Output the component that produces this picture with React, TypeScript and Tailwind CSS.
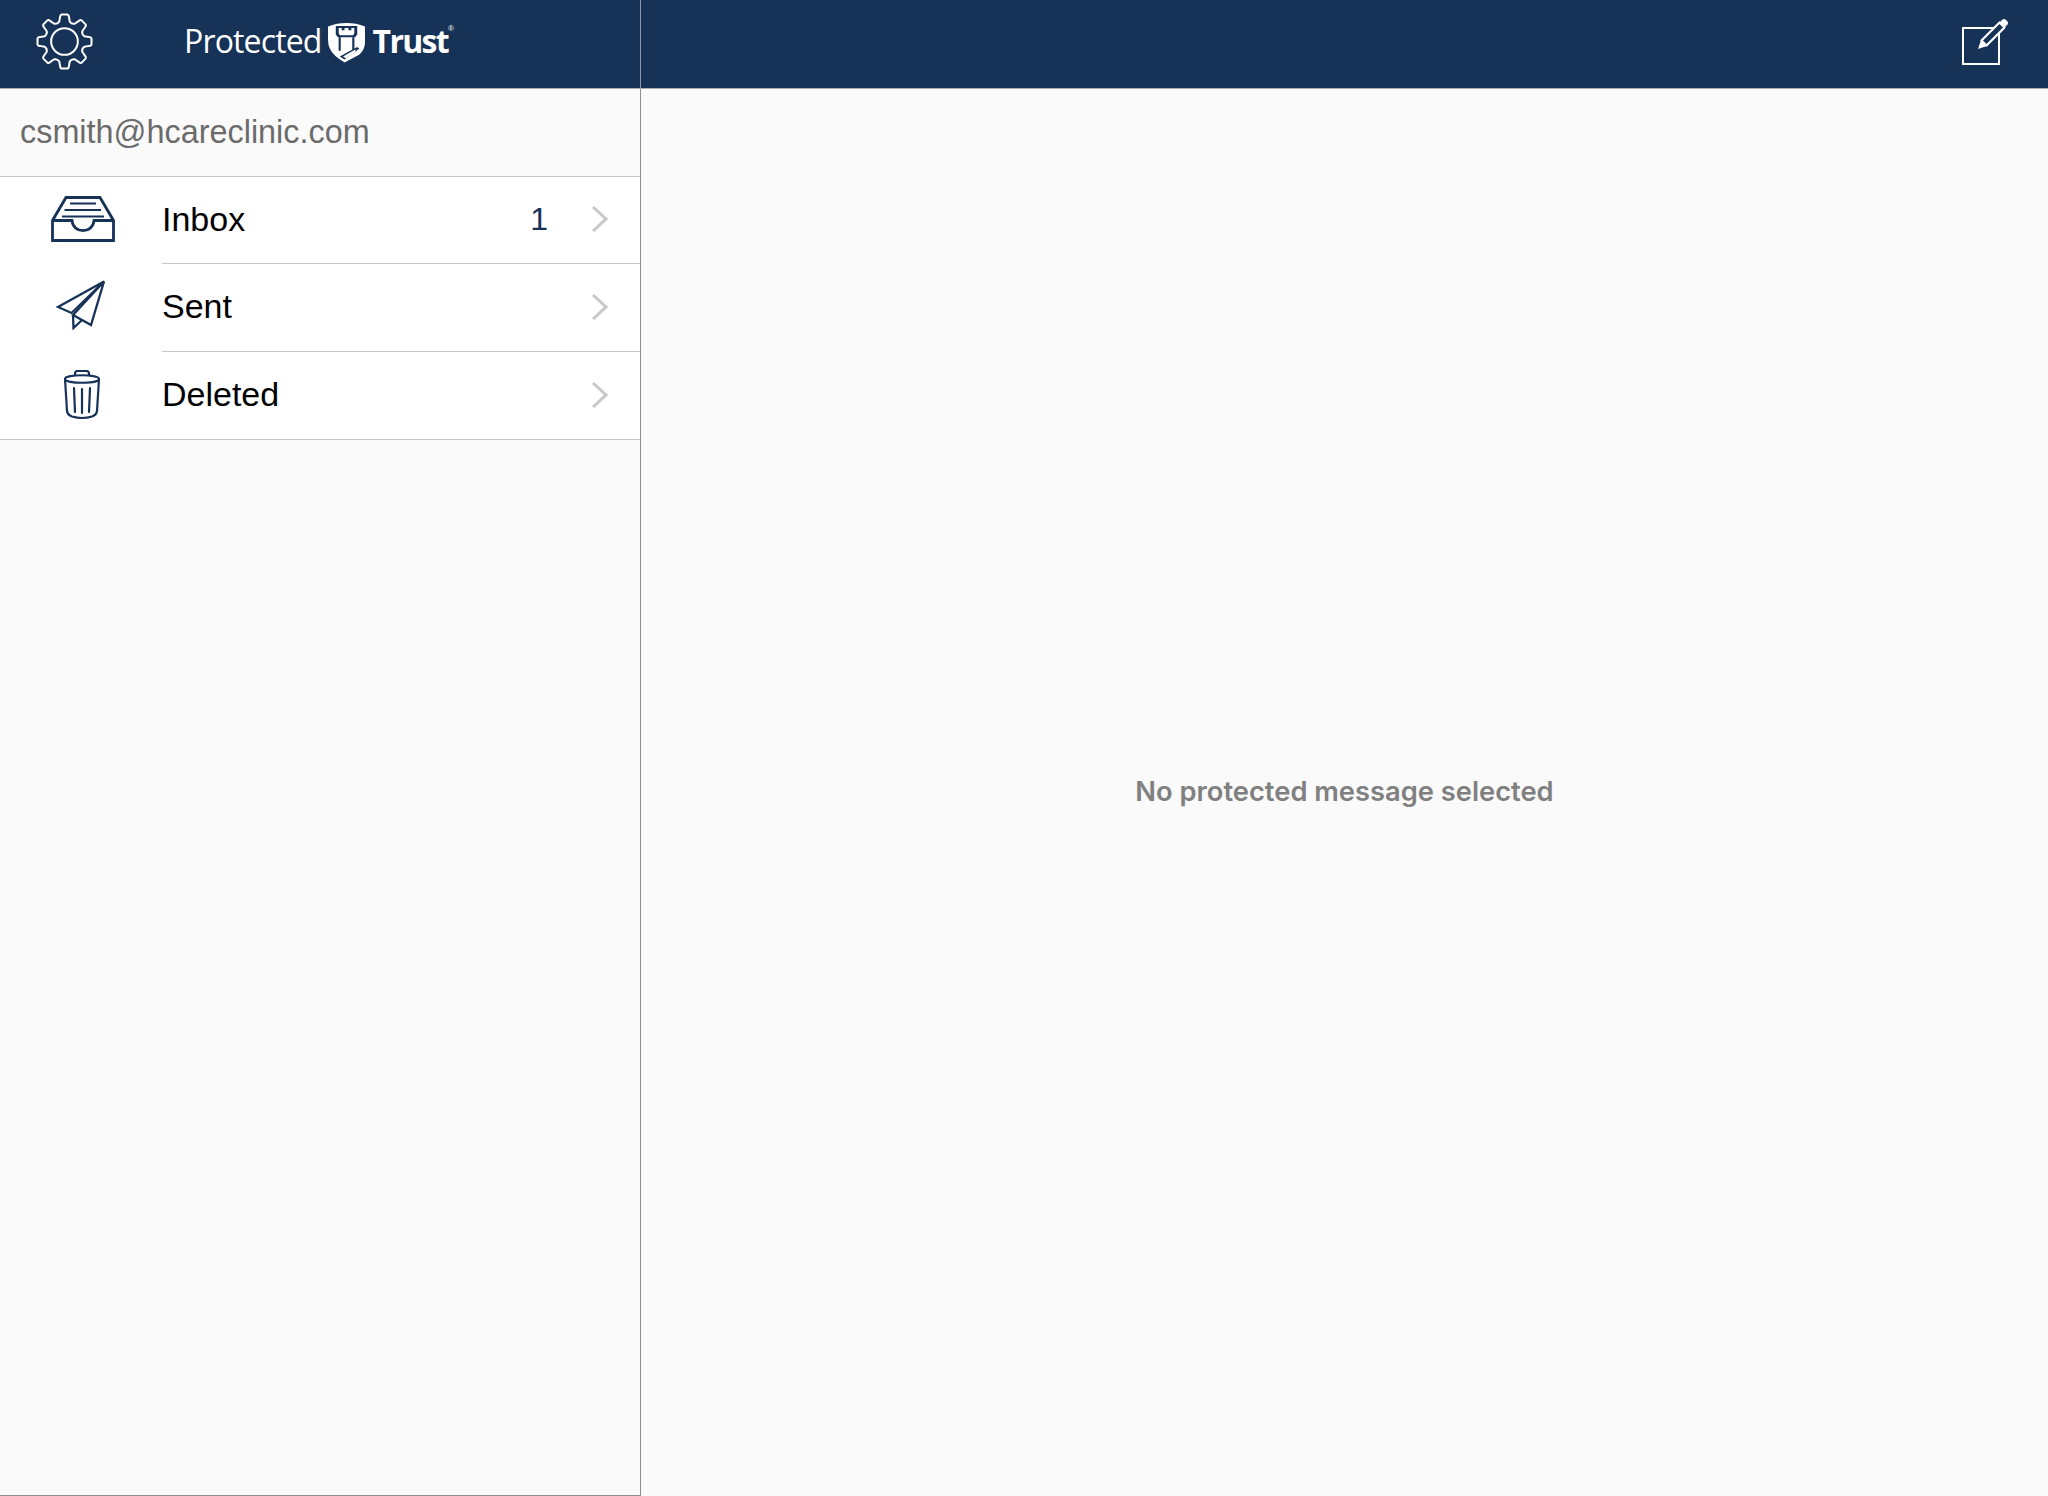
import type { ReactNode } from 'react';

function GearIcon() {
  const cx = 32;
  const cy = 32;
  const pt = (r: number, deg: number) => {
    const rad = ((deg - 90) * Math.PI) / 180;
    return `${(cx + r * Math.cos(rad)).toFixed(2)} ${(cy + r * Math.sin(rad)).toFixed(2)}`;
  };
  const parts: string[] = [];
  for (let i = 0; i < 8; i++) {
    const a = i * 45;
    parts.push(`${i === 0 ? 'M' : 'L'}${pt(21.5, a - 15)}`);
    parts.push(`L${pt(26.5, a - 10)}`);
    parts.push(`Q${pt(28.5, a - 9)} ${pt(28.5, a - 6)}`);
    parts.push(`L${pt(28.5, a + 6)}`);
    parts.push(`Q${pt(28.5, a + 9)} ${pt(26.5, a + 10)}`);
    parts.push(`L${pt(21.5, a + 15)}`);
    parts.push(`Q${pt(19.5, a + 22.5)} ${pt(21.5, a + 30)}`);
  }
  return (
    <svg viewBox="0 0 64 64" className="h-[61px] w-[61px]" fill="none" stroke="white" strokeWidth="2.1" strokeLinejoin="round">
      <path d={`${parts.join(' ')} Z`} />
      <circle cx={cx} cy={cy} r="14" />
    </svg>
  );
}

function ShieldLogo() {
  return (
    <svg viewBox="0 0 38 41" className="h-[41px] w-[37px]">
      <path fill="white" d="M0 4 Q9 0.5 19 0.5 Q29 0.5 38 4 L38 20 Q38 28 32 33 L17 41 Q5 34 2 27 Q0 23 0 18 Z" />
      <path fill="none" stroke="#163257" strokeWidth="2.2" d="M12 15 V29 M26 15 V29" />
      <path fill="#163257" d="M8 12 V3.5 H30 V12 L28 15 H10 Z" />
      <path fill="white" d="M11 5.5 H14 V8 H17 V5.5 H21 V8 H24 V5.5 H27 V11.5 L25.5 13 H12.5 L11 11.5 Z" />
      <path fill="#163257" d="M12 35 L30 25 L32 27 L17 38 Z" />
      <path fill="white" d="M15.5 35 L28.5 27.5 L27.5 30.5 L18.5 37 Z" />
    </svg>
  );
}

function ComposeIcon() {
  return (
    <svg viewBox="0 0 48 48" className="mb-[4px] h-[48px] w-[48px]" fill="none">
      <rect x="2" y="10" width="36" height="36" stroke="white" strokeWidth="2" />
      <path d="M20.5 22.5 L38.5 4.5 L43.5 9.5 L25.5 27.5 Z" fill="#163257" stroke="white" strokeWidth="2.2" strokeLinejoin="round" />
      <path d="M17 31 L20 22 L26 28 Z" fill="white" />
      <path d="M38.5 4.5 L41.5 1.5 Q43 0.3 44.5 1.5 L46.5 3.5 Q47.7 5 46.5 6.5 L43.5 9.5 Z" fill="white" />
    </svg>
  );
}

function InboxIcon() {
  return (
    <svg viewBox="0 0 64 46" className="mb-[3px] ml-[3px] h-[46px] w-[64px]" fill="none" stroke="#163257" strokeWidth="2.8">
      <path d="M1.5 44.5 V24.5 L15 1.5 H49 L62.5 24.5 V44.5 Z" />
      <path d="M1.5 24.5 H21 C22 38 42 38 43 24.5 H62.5" />
      <path d="M19 7.5 H45 M13.5 14 H50 M11 20.5 H53" strokeWidth="2" />
    </svg>
  );
}

function SentIcon() {
  return (
    <svg viewBox="0 0 50 50" className="mb-[6px] h-[50px] w-[50px]" fill="none" stroke="#163257" strokeWidth="2.3">
      <path d="M48 1.5 L2 27 L15.5 33 Z" />
      <path d="M48 1.5 L35 45 L17 35 L48 1.5 Z" />
      <path d="M17 35 L17.5 48 L26 40" />
    </svg>
  );
}

function TrashIcon() {
  return (
    <svg viewBox="0 0 38 50" className="mb-[1px] ml-[1px] h-[50px] w-[38px]" fill="none" stroke="#163257" strokeWidth="2.2" strokeLinecap="round">
      <path d="M12 5 V3.5 Q12 1 15 1 H23 Q26 1 26 3.5 V5" />
      <path d="M2 9 C2 4 36 4 36 9 C36 14 2 14 2 9 Z" />
      <path d="M2 9 L4 41 Q4.5 45 9 46.5 Q19 49.5 29 46.5 Q33.5 45 34 41 L36 9" />
      <path d="M11 18 L12 42 M19 19 V43 M27 18 L26 42" />
    </svg>
  );
}

function Chevron() {
  return (
    <svg viewBox="0 0 18 28" className="h-[28px] w-[18px]" fill="none" stroke="#c7c7cc" strokeWidth="3">
      <path d="M2 2 L15 14 L2 26" />
    </svg>
  );
}

function FolderRow({ icon, label, count, last, className }: { icon: ReactNode; label: string; count?: number; last?: boolean; className: string }) {
  return (
    <div className={`flex items-stretch ${className}`}>
      <div className="flex w-[162px] shrink-0 items-center justify-center">{icon}</div>
      <div className={`flex flex-1 items-center pr-[31px] pb-[2px] ${last ? '' : 'border-b border-[#c8c7cc]'}`}>
        <span className="flex-1 text-[34px] text-black">{label}</span>
        {count !== undefined && <span className="mr-[43px] text-[32px] text-[#163257]">{count}</span>}
        <Chevron />
      </div>
    </div>
  );
}

export default function App() {
  return (
    <div className="flex h-[1496px] w-[2048px] flex-col overflow-hidden bg-[#fafafa] font-['Liberation_Sans',sans-serif]">
      <header className="flex h-[89px] shrink-0 border-b border-[#a9aeb5] bg-[#163257]">
        <div className="flex w-[641px] shrink-0 items-center border-r border-[#8d9aab] pb-[6px] pl-[34px]">
          <GearIcon />
          <div className="mb-[1px] ml-[89px] flex items-center text-white">
            <span className="font-['Open_Sans',sans-serif] text-[32px] tracking-[-0.85px]">Protected</span>
            <span className="mr-[8px] ml-[6px] mt-[3px]"><ShieldLogo /></span>
            <span className="font-['Open_Sans',sans-serif] text-[32px] font-bold tracking-[-1.7px]">Trust</span>
            <span className="mb-[24px] text-[8px]">®</span>
          </div>
        </div>
        <div className="flex flex-1 items-center justify-end pr-[39px]">
          <ComposeIcon />
        </div>
      </header>
      <div className="flex min-h-0 flex-1">
        <aside className="flex w-[641px] shrink-0 flex-col border-r border-b border-[#8e8e8e]">
          <div className="flex h-[88px] items-center border-b border-[#c8c7cc] pl-[20px] text-[32.4px] text-[#6b6b6b]">
            csmith@hcareclinic.com
          </div>
          <div className="border-b border-[#c8c7cc] bg-white">
            <FolderRow className="h-[87px]" icon={<InboxIcon />} label="Inbox" count={1} />
            <FolderRow className="h-[88px]" icon={<SentIcon />} label="Sent" />
            <FolderRow className="h-[87px]" icon={<TrashIcon />} label="Deleted" last />
          </div>
        </aside>
        <main className="flex flex-1 items-center justify-center">
          <span className="font-['Inter',sans-serif] text-[27.3px] font-semibold text-[#808080]">No protected message selected</span>
        </main>
      </div>
    </div>
  );
}
